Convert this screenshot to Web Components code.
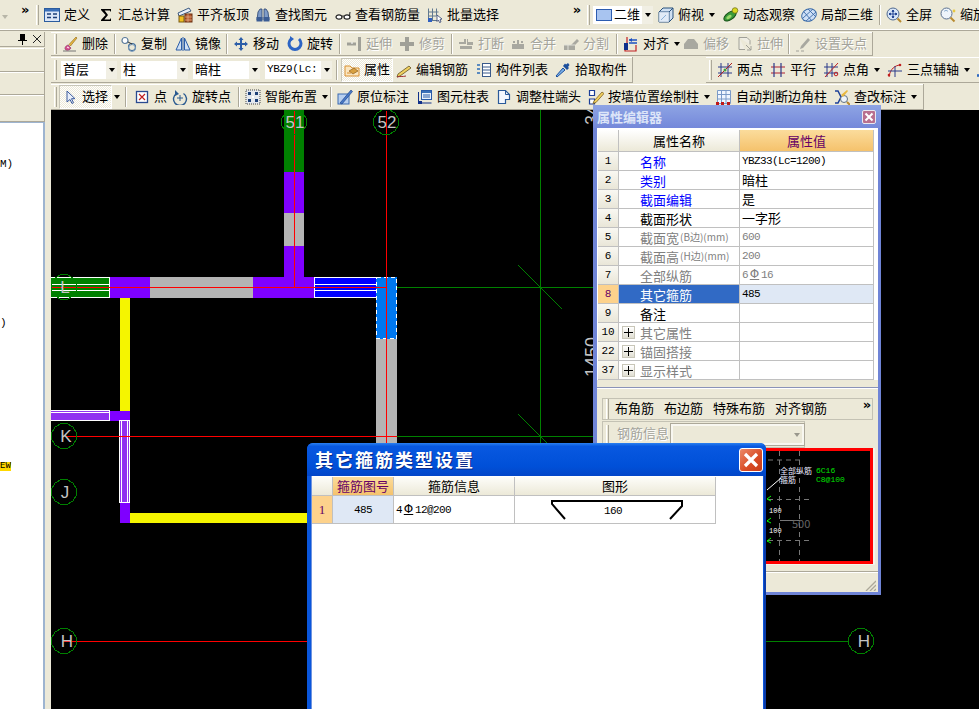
<!DOCTYPE html>
<html lang="zh">
<head>
<meta charset="utf-8">
<title>钢筋算量</title>
<style>
  html, body { margin: 0; padding: 0; background: #ece9d8; overflow: hidden; }
  body { font: 13px/16px "Noto Sans CJK SC", "Liberation Sans", sans-serif; color: #000; }
</style>
</head>
<body>
<cad-app>
  <tool-row slot="top" full>
    <top-stub></top-stub>
    <tool-grip></tool-grip>
    <tool-btn w="54" icon="define" label="定义"></tool-btn>
    <tool-btn w="79" icon="sigma" label="汇总计算"></tool-btn>
    <tool-btn w="78" icon="level" label="平齐板顶"></tool-btn>
    <tool-btn w="80" icon="binoculars" label="查找图元"></tool-btn>
    <tool-btn w="92" icon="glasses" label="查看钢筋量"></tool-btn>
    <tool-btn w="146" icon="batch" label="批量选择"></tool-btn>
    <tool-more w="14"></tool-more>
    <tool-grip></tool-grip>
    <tool-combo w="60" gap="1" icon="plane" label="二维"></tool-combo>
    <tool-btn w="65" gap="2" icon="cube" label="俯视" caret></tool-btn>
    <tool-btn w="78" icon="orbit" label="动态观察"></tool-btn>
    <tool-btn w="77" icon="sphere" label="局部三维"></tool-btn>
    <tool-sep></tool-sep>
    <tool-btn w="54" icon="fullscreen" label="全屏"></tool-btn>
    <tool-btn w="60" icon="zoom" label="缩放"></tool-btn>
  </tool-row>

  <dock-panel slot="dock"></dock-panel>

  <tool-row slot="bars" h="25">
    <tool-bar>
      <tool-grip></tool-grip>
      <tool-btn w="51" icon="brush" label="删除"></tool-btn>
      <tool-sep></tool-sep>
      <tool-btn w="54" icon="copy" label="复制"></tool-btn>
      <tool-btn w="50" icon="mirror" label="镜像"></tool-btn>
      <tool-sep></tool-sep>
      <tool-btn w="54" icon="move" label="移动"></tool-btn>
      <tool-btn w="51" icon="rotate" label="旋转"></tool-btn>
      <tool-sep></tool-sep>
      <tool-btn w="53" icon="extend" label="延伸" disabled></tool-btn>
      <tool-btn w="51" icon="trim" label="修剪" disabled></tool-btn>
      <tool-sep></tool-sep>
      <tool-btn w="52" icon="cut" label="打断" disabled></tool-btn>
      <tool-btn w="53" icon="merge" label="合并" disabled></tool-btn>
      <tool-btn w="52" icon="split" label="分割" disabled></tool-btn>
      <tool-sep></tool-sep>
      <tool-btn w="60" icon="align" label="对齐" caret></tool-btn>
      <tool-btn w="54" icon="offset" label="偏移" disabled></tool-btn>
      <tool-btn w="50" icon="stretch" label="拉伸" disabled></tool-btn>
      <tool-sep></tool-sep>
      <tool-btn w="80" icon="grippen" label="设置夹点" disabled></tool-btn>
    </tool-bar>
  </tool-row>

  <tool-row slot="bars" h="27">
    <tool-bar>
      <tool-grip></tool-grip>
      <tool-combo w="56" gap="2" label="首层"></tool-combo>
      <tool-combo w="67" gap="4" label="柱"></tool-combo>
      <tool-combo w="67" gap="5" label="暗柱"></tool-combo>
      <tool-combo w="67" gap="5" label="YBZ9(Lc:" mono></tool-combo>
      <tool-sep w="9"></tool-sep>
      <tool-btn w="52" icon="props" label="属性" pressed></tool-btn>
      <tool-btn w="80" icon="pencil" label="编辑钢筋"></tool-btn>
      <tool-btn w="79" icon="list" label="构件列表"></tool-btn>
      <tool-btn w="80" icon="dropper" label="拾取构件"></tool-btn>
    </tool-bar>
    <tool-bar gap="73">
      <tool-grip></tool-grip>
      <tool-btn w="53" icon="twopoint" label="两点"></tool-btn>
      <tool-btn w="53" icon="parallel" label="平行"></tool-btn>
      <tool-btn w="64" icon="angle" label="点角" caret></tool-btn>
      <tool-btn w="90" icon="arc" label="三点辅轴" caret></tool-btn>
      <tool-btn w="20" icon="tail"></tool-btn>
    </tool-bar>
  </tool-row>

  <tool-row slot="bars" h="27">
    <tool-bar>
      <tool-grip></tool-grip>
      <tool-btn w="53" icon="arrow" label="选择" pressed></tool-btn>
      <tool-caret w="9"></tool-caret>
      <tool-sep w="10"></tool-sep>
      <tool-btn w="38" icon="point" label="点"></tool-btn>
      <tool-btn w="65" icon="rotpoint" label="旋转点"></tool-btn>
      <tool-sep></tool-sep>
      <tool-btn w="84" icon="smart" label="智能布置" caret></tool-btn>
      <tool-sep></tool-sep>
      <tool-btn w="80" icon="inplace" label="原位标注"></tool-btn>
      <tool-btn w="79" icon="coltable" label="图元柱表"></tool-btn>
      <tool-btn w="92" icon="adjust" label="调整柱端头"></tool-btn>
      <tool-btn w="128" icon="bywall" label="按墙位置绘制柱" caret></tool-btn>
      <tool-btn w="118" icon="autocorner" label="自动判断边角柱"></tool-btn>
      <tool-btn w="92" icon="checkmark" label="查改标注" caret></tool-btn>
    </tool-bar>
  </tool-row>

  <cad-canvas slot="canvas"></cad-canvas>

  <prop-editor slot="windows">
    <prop-row n="1" name="名称" kind="link" value="YBZ33(Lc=1200)" mono></prop-row>
    <prop-row n="2" name="类别" kind="link" value="暗柱"></prop-row>
    <prop-row n="3" name="截面编辑" kind="link" value="是"></prop-row>
    <prop-row n="4" name="截面形状" value="一字形"></prop-row>
    <prop-row n="5" name="截面宽" note="(B边)(mm)" kind="muted" value="600" mono></prop-row>
    <prop-row n="6" name="截面高" note="(H边)(mm)" kind="muted" value="200" mono></prop-row>
    <prop-row n="7" name="全部纵筋" kind="muted" value="6Φ16" mono></prop-row>
    <prop-row n="8" name="其它箍筋" kind="selected" value="485" mono></prop-row>
    <prop-row n="9" name="备注"></prop-row>
    <prop-row n="10" name="其它属性" kind="muted" expand></prop-row>
    <prop-row n="22" name="锚固搭接" kind="muted" expand></prop-row>
    <prop-row n="37" name="显示样式" kind="muted" expand></prop-row>
  </prop-editor>

  <stirrup-dialog slot="windows"></stirrup-dialog>
</cad-app>

<script>
const ICONS = {
  define: `<rect x=".5" y="1.5" width="15" height="13" fill="#dbe6f7" stroke="#2b5c9e"/><rect x="1" y="2" width="14" height="2.5" fill="#3a6fb8"/><path d="M3 7h4M3 10.5h4M9 7h4M9 10.5h4" stroke="#1c3f78" stroke-width="1.3"/>`,
  sigma: `<path d="M3 2h10v3l-1.2-1.5H6.6L10 8l-3.6 4.4h5.4L13 11v3H3v-1l4.6-5L3 3z" fill="#000"/>`,
  level: `<path d="M1 6l11-5 2 3-12 5z" fill="#e8eef6" stroke="#3c5a80"/><rect x="2" y="9" width="5" height="6" fill="#f0c020" stroke="#7a5a10"/><rect x="8" y="7" width="7" height="8" fill="#b85a30" stroke="#6a3010"/><path d="M8 10h7M8 13h7M11 7v8" stroke="#e8c0a0" stroke-width=".6"/>`,
  binoculars: `<path d="M2 13l1-8 2-3h2v11zM14 13l-1-8-2-3H9v11z" fill="#7f9cc8" stroke="#26406e" stroke-width=".8"/><rect x="1.5" y="10" width="6" height="4.5" fill="#3b5c94"/><rect x="8.5" y="10" width="6" height="4.5" fill="#3b5c94"/>`,
  glasses: `<ellipse cx="4" cy="10" rx="3" ry="2.2" fill="#fff" stroke="#222" stroke-width="1.2"/><ellipse cx="12" cy="10" rx="3" ry="2.2" fill="#fff" stroke="#222" stroke-width="1.2"/><path d="M7 9.5c1-1 1-1 2 0M14.5 9L15 5" stroke="#222" fill="none"/>`,
  batch: `<path d="M1.5 1.5v12h9M1.5 5h10M1.5 9h8M5.5 1.5v12M9.5 1.5v7" stroke="#607890" fill="none"/><rect x="1" y="11" width="4" height="4" fill="#3060c0"/><path d="M10 8l5 4-2 .5 1 2.5-1.5.5-1-2.5-1.5 1.5z" fill="#fff" stroke="#304070" stroke-width=".8"/>`,
  plane: `<rect x=".5" y="2.5" width="15" height="11" fill="#a8c4f0" stroke="#2c5cb0"/>`,
  cube: `<path d="M1 5l4-4h10v10l-4 4H1z" fill="#cfe0f2" stroke="#28507c"/><path d="M1 5h10v10M11 5l4-4" stroke="#28507c" fill="none"/><path d="M1 5h10v10H1z" fill="#e8f0fa" opacity=".7"/><path d="M3 13l5-5" stroke="#8ab0d8"/>`,
  orbit: `<ellipse cx="7" cy="9" rx="7" ry="3.6" transform="rotate(-35 7 9)" fill="#3a9a3a" stroke="#155015"/><ellipse cx="6" cy="10" rx="3" ry="1.6" transform="rotate(-35 6 10)" fill="#9ad86a"/><circle cx="12" cy="3.5" r="2.8" fill="#d8d820" stroke="#6a6a10" stroke-width=".7"/>`,
  sphere: `<ellipse cx="8" cy="8" rx="7.5" ry="6" transform="rotate(-25 8 8)" fill="#cfe0f6" stroke="#3a6aa8"/><path d="M2 11L12 2M5 14L15 5M3 5l8 9M7 2l8 8" stroke="#3a6aa8" stroke-width=".9"/>`,
  fullscreen: `<circle cx="7" cy="7" r="6" fill="#d8e6f8" stroke="#506a90"/><path d="M7 3v8M3 7h8M7 3L6 4.4h2zM7 11l-1-1.4h2zM3 7l1.4-1v2zM11 7l-1.4-1v2z" stroke="#1c3e90" fill="#1c3e90" stroke-width=".9"/><path d="M11.5 11.5l3.5 3.5" stroke="#b88a30" stroke-width="2"/>`,
  zoom: `<circle cx="6.5" cy="6.5" r="5.5" fill="#eef4fb" stroke="#5a7090"/><path d="M4 4.5c1-1.4 3-1.4 4 0" stroke="#8fb0d0" fill="none"/><path d="M10.5 10.5l4 4" stroke="#b88a30" stroke-width="2"/><circle cx="14" cy="4" r="1.4" fill="#e8c840"/>`,
  brush: `<path d="M1 15h13" stroke="#777"/><path d="M4 14c-2-1-1-4 2-5l3 3c-1 2-3 2.400-5 2z" fill="#d85090" stroke="#803060" stroke-width=".6"/><path d="M7 8.500L14 1l1 1-6.500 8z" fill="#e8b840" stroke="#8a6010" stroke-width=".6"/><path d="M5 11l2 1" stroke="#fff"/>`,
  copy: `<circle cx="4" cy="4.500" r="3" fill="#fff" stroke="#5a7a9a" stroke-width="1.200"/><circle cx="11" cy="11" r="3.500" fill="none" stroke="#3a6a9a" stroke-width="1.200"/><circle cx="11" cy="12" r="3.500" fill="none" stroke="#7a9aba"/><path d="M7 6l4 2" stroke="#333"/>`,
  mirror: `<path d="M1 14L6.500 2v12zM15 14L9.500 2v12z" fill="#cfe0f4" stroke="#2a5ca8" stroke-linejoin="round"/><path d="M8 1v14" stroke="#2a5ca8"/>`,
  move: `<path d="M8 1l2.500 3H9v3h3V5.500L15 8l-3 2.500V9H9v3h1.500L8 15l-2.500-3H7V9H4v1.500L1 8l3-2.500V7h3V4H5.500z" fill="#2c5ea8"/>`,
  rotate: `<path d="M4 3a6 6 0 1 0 8 0" fill="none" stroke="#2c64c4" stroke-width="3"/><path d="M3 0v6l4-3z" fill="#2c64c4"/>`,
  extend: `<path d="M1 8h9" stroke="#a0a098" stroke-width="3"/><rect x="12" y="1" width="3" height="14" fill="#a0a098"/><path d="M5 7h2" stroke="#fff"/>`,
  trim: `<path d="M8 1v14M1 8h14" stroke="#a0a098" stroke-width="4"/>`,
  cut: `<path d="M1 6h5v-3h2v5H1zM10 6h5v3H9V3h1z M2 10h12v3H2z" fill="#a8a8a0"/>`,
  merge: `<path d="M2 8h5V4h2v4h5v5H2z" fill="#a8a8a0"/><rect x="3" y="5" width="2" height="2" fill="#a8a8a0"/><rect x="11" y="5" width="2" height="2" fill="#a8a8a0"/>`,
  split: `<path d="M1 9h7l6-6 2 2-4 4v5H1z" fill="#a8a8a0"/><path d="M1 9h11M5 9v5" stroke="#e0e0d8"/>`,
  align: `<path d="M4 1v8H2v6h11v-6" stroke="#c02020" stroke-width="1.200" fill="none"/><rect x="1" y="7" width="4" height="7" fill="#10308a"/><path d="M6 4h8M6 7h8" stroke="#1c50c0" stroke-width="1.300"/><path d="M6 4l3-2v4z" fill="#1c50c0"/>`,
  offset: `<path d="M5 3h6l4 5v5H1V8z" fill="#a8a8a0"/>`,
  stretch: `<path d="M2 1.500h8l3 3v4M2 1.500v12h6" fill="#f0eee4" stroke="#a0a098"/><path d="M9 9l5 5M14 10v4h-4" stroke="#a0a098" fill="none"/>`,
  grippen: `<path d="M6 10l7-8 2 2-7 8-3 1z" fill="#a8a8a0"/><path d="M1 15h3M6 15h3" stroke="#a0a098"/>`,
  props: `<path d="M1 4h5l2 2h7v8H1z" fill="#fbe6c0" stroke="#d89030"/><path d="M5 9l5-3 4 3-5 3z" fill="#d8a040" stroke="#805010" stroke-width=".6"/><path d="M3 11h4" stroke="#d89030"/>`,
  pencil: `<path d="M2 12L13 4l2 2-11 8-3 1z" fill="#f0d060" stroke="#504010" stroke-width=".7"/><path d="M1 15c3-1 5 0 9-1" stroke="#a03030" fill="none"/>`,
  list: `<g fill="#5a8ac0"><rect x="1" y="2" width="3" height="2"/><rect x="1" y="6" width="3" height="2"/><rect x="1" y="10" width="3" height="2"/></g><rect x="6.500" y="1.500" width="8" height="13" fill="#fff" stroke="#3a5a8a"/><path d="M6.500 5h8M6.500 8h8M6.500 11h8" stroke="#3a5a8a"/>`,
  dropper: `<path d="M2 15l-1-1 7-8 2 2z" fill="#7ab0e8" stroke="#1c4f9c"/><path d="M8 4l4 4 2-2-1-1 1.500-2-1.500-2-2 1.500-1-1z" fill="#1c4f9c"/>`,
  twopoint: `<path d="M4 1v14M11 1v14M1 5h14M1 11h14" stroke="#2a3a8a"/><path d="M1 15L15 1" stroke="#b02020"/><circle cx="8" cy="8" r="1.500" fill="#40a040"/>`,
  parallel: `<path d="M1 5h14M1 11h14" stroke="#b02030" stroke-width="1.200"/><path d="M4 1v14M11 1v14" stroke="#2a3a8a" stroke-width="1.200"/>`,
  angle: `<path d="M4 1v14M9 1v14M1 5h14M1 11h14" stroke="#2a3a8a"/><path d="M2 15L15 1" stroke="#c02020"/><circle cx="13" cy="12" r="1.800" fill="none" stroke="#c02020"/>`,
  arc: `<path d="M2 15C3 7 8 3 14 3" stroke="#c02020" fill="none"/><path d="M1 9h14M8 4v11" stroke="#2a3a8a"/><circle cx="2" cy="13" r="1.300" fill="#c02020"/><circle cx="13" cy="3" r="1.300" fill="#c02020"/>`,
  tail: `<path d="M0 14h3M1 12v2" stroke="#2060c0" stroke-width="1.500"/>`,
  arrow: `<path d="M5 2v11l3-2.500 2 4 1.500-.800-2-4H13z" fill="#e8eefa" stroke="#3a5a9a"/>`,
  point: `<rect x="2.500" y="2.500" width="11" height="11" fill="#fff" stroke="#2a4a90" stroke-width="1.300"/><path d="M5 5l6 6M11 5l-6 6" stroke="#c02020" stroke-width="1.200"/>`,
  rotpoint: `<path d="M4.500 4.500a6.500 6.500 0 1 0 7 0" fill="none" stroke="#2a5a90" stroke-width="1.400"/><path d="M3 1v6l4-2z" fill="#2a5a90"/><path d="M8 6v6M5 9h6" stroke="#2a5a90"/>`,
  smart: `<rect x="1" y="1" width="14" height="14" fill="#e4e8ee" stroke="#444" stroke-dasharray="1 1"/><g fill="#1c3f78"><rect x="3" y="3" width="3" height="3"/><rect x="10" y="3" width="3" height="3"/><rect x="3" y="10" width="3" height="3"/><rect x="10" y="10" width="3" height="3"/></g><path d="M7 7h2v2H7z" fill="#fff"/>`,
  inplace: `<rect x="1" y="5" width="11" height="10" fill="#b8d0f0" stroke="#3a6ab0"/><path d="M3 14L14 1l1.500 1.500L5 15z" fill="#4a7ac8" stroke="#123a80" stroke-width=".6"/>`,
  coltable: `<rect x="4.500" y="1.500" width="10" height="9" fill="#e8f0fb" stroke="#2a5aa8"/><rect x="5" y="2" width="9" height="2" fill="#3a6fb8"/><path d="M6 6h7M6 8h7" stroke="#2a5aa8"/><path d="M1.500 3v11h13" stroke="#10308a" fill="none"/><rect x="1" y="12" width="4" height="3" fill="#10308a"/>`,
  adjust: `<path d="M2.500 1.500h7l4 4v5h-4v4h-7z" fill="#f4f8fe" stroke="#2a5a9a" stroke-width="1.200"/><path d="M9.500 1.500v4h4" fill="none" stroke="#2a5a9a"/>`,
  bywall: `<path d="M1.500 1.500h5v5h-5zM1.500 10h5v5h-5z" fill="#fff" stroke="#1c3f98" stroke-width="1.200"/><path d="M6 12L14 3l2 1.500-8 9-3 1z" fill="#f0d060" stroke="#705010" stroke-width=".7"/>`,
  autocorner: `<path d="M1.500 1.500h13v13h-13zM5.500 1.500v13M10 1.500v13M1.500 5.500h13M1.500 10h13" fill="#f0f6ff" stroke="#7a9ac8"/><g fill="#c01818"><rect x="0" y="13" width="3" height="3"/><rect x="5" y="13" width="3" height="3"/><rect x="11" y="13" width="3" height="3"/></g>`,
  checkmark: `<path d="M1 2h3l3 6-3 6H1" fill="none" stroke="#1c3f98" stroke-width="1.500"/><circle cx="10" cy="10" r="3.500" fill="#eef4fb" stroke="#607080"/><path d="M13 13l3 3" stroke="#b88a30" stroke-width="2"/><path d="M7 6l6-5 1 1-5 6z" fill="#e8b840"/>`
};

function iconSvg(name, size = 16) {
  return `<svg width="${size}" height="${size}" viewBox="0 0 16 16" style="display:block;flex:none">${ICONS[name] || ''}</svg>`;
}

const MONO = `"Liberation Mono", "Noto Sans CJK SC", monospace`;
const CARET = `<i style="display:block;flex:none;width:0;height:0;border:3px solid transparent;border-top:4px solid #000;border-bottom:0;"></i>`;
// rebar grade mark: takes a full CJK cell in the reference
const REBAR = `<span style="display:inline-block;width:13px;text-align:center;font:12px/16px 'DejaVu Sans',sans-serif;letter-spacing:0;text-decoration:underline">Φ</span>`;

const appTemplate = document.createElement('template');
appTemplate.innerHTML = `
  <style>
    :host {
      display: grid;
      position: relative;
      width: 979px;
      height: 709px;
      overflow: hidden;
      background: #ece9d8;
      grid-template-columns: 51px 928px;
      grid-template-rows: 31px 79px 599px;
      grid-template-areas: "top top" "dock bars" "dock canvas";
    }
    .top { grid-area: top; min-width: 0; }
    .dock { grid-area: dock; min-height: 0; }
    .bars { grid-area: bars; display: flex; flex-direction: column; min-width: 0; }
    .canvas { grid-area: canvas; min-height: 0; }
  </style>
  <div class="top"><slot name="top"></slot></div>
  <div class="dock"><slot name="dock"></slot></div>
  <div class="bars"><slot name="bars"></slot></div>
  <div class="canvas"><slot name="canvas"></slot></div>
  <slot name="windows"></slot>
`;
class CadApp extends HTMLElement {
  constructor() {
    super();
    this.attachShadow({ mode: 'open' });
    this.shadowRoot.appendChild(appTemplate.content.cloneNode(true));
  }
}

const rowTemplate = document.createElement('template');
rowTemplate.innerHTML = `
  <style>
    :host { display: flex; box-sizing: border-box; overflow: hidden; flex: none; }
    :host([full]) { height: 31px; border-bottom: 1px solid #aca899; box-shadow: inset 0 -1px 0 #fff; align-items: center; }
  </style>
  <slot></slot>
`;
class ToolRow extends HTMLElement {
  constructor() {
    super();
    this.attachShadow({ mode: 'open' });
    this.shadowRoot.appendChild(rowTemplate.content.cloneNode(true));
  }
  connectedCallback() {
    if (this.hasAttribute('h')) this.style.height = this.getAttribute('h') + 'px';
  }
}

const barTemplate = document.createElement('template');
barTemplate.innerHTML = `
  <style>
    :host {
      display: flex;
      align-items: center;
      flex: none;
      box-sizing: border-box;
      height: calc(100% - 1px);
      margin-top: 1px;
      background: #ece9d8;
      border-bottom: 1px solid #aca899;
      border-right: 1px solid #aca899;
      box-shadow: inset 0 1px 0 #fff;
    }
  </style>
  <slot></slot>
`;
class ToolBar extends HTMLElement {
  constructor() {
    super();
    this.attachShadow({ mode: 'open' });
    this.shadowRoot.appendChild(barTemplate.content.cloneNode(true));
  }
  connectedCallback() {
    if (this.hasAttribute('gap')) this.style.marginLeft = this.getAttribute('gap') + 'px';
  }
}

const gripTemplate = document.createElement('template');
gripTemplate.innerHTML = `
  <style>
    :host { display: block; flex: none; width: 8px; height: 20px; box-sizing: border-box; }
    div { width: 3px; height: 100%; margin-left: 3px; background: #ece9d8; border-left: 1px solid #fff; border-right: 1px solid #aca899; box-sizing: border-box; }
  </style>
  <div></div>
`;
class ToolGrip extends HTMLElement {
  constructor() {
    super();
    this.attachShadow({ mode: 'open' });
    this.shadowRoot.appendChild(gripTemplate.content.cloneNode(true));
  }
}

const sepTemplate = document.createElement('template');
sepTemplate.innerHTML = `
  <style>
    :host { display: block; flex: none; width: 8px; height: 20px; box-sizing: border-box; padding-left: 4px; }
    div { width: 2px; height: 100%; border-left: 1px solid #aca899; border-right: 1px solid #fff; box-sizing: border-box; }
  </style>
  <div></div>
`;
class ToolSep extends HTMLElement {
  constructor() {
    super();
    this.attachShadow({ mode: 'open' });
    this.shadowRoot.appendChild(sepTemplate.content.cloneNode(true));
  }
  connectedCallback() {
    if (this.hasAttribute('w')) this.style.width = this.getAttribute('w') + 'px';
  }
}

const btnTemplate = document.createElement('template');
btnTemplate.innerHTML = `
  <style>
    :host {
      display: flex;
      align-items: center;
      flex: none;
      box-sizing: border-box;
      height: 100%;
      padding-left: 3px;
      white-space: nowrap;
    }
    .ico { flex: none; margin-right: 4px; }
    .ico:empty { display: none; }
    .txt { padding-bottom: 2px; }
    .caret { margin-left: 5px; }
    :host([disabled]) { color: #a3a39b; text-shadow: 1px 1px 0 #fff; }
    :host([pressed]) {
      height: 24px;
      padding-left: 2px;
      border: 1px solid #c8c6b8;
      background: repeating-conic-gradient(#fff 0 25%, #ece9d8 0 50%) 0 0 / 2px 2px;
      border-right-color: #fff;
      border-bottom-color: #fff;
    }
  </style>
  <span class="ico"></span><span class="txt"></span><span class="caret"></span>
`;
class ToolBtn extends HTMLElement {
  constructor() {
    super();
    this.attachShadow({ mode: 'open' });
    this.shadowRoot.appendChild(btnTemplate.content.cloneNode(true));
  }
  connectedCallback() {
    const root = this.shadowRoot;
    if (this.hasAttribute('w')) this.style.width = this.getAttribute('w') + 'px';
    if (this.hasAttribute('gap')) this.style.marginLeft = this.getAttribute('gap') + 'px';
    if (this.hasAttribute('icon')) root.querySelector('.ico').innerHTML = iconSvg(this.getAttribute('icon'));
    root.querySelector('.txt').textContent = this.getAttribute('label') || '';
    if (this.hasAttribute('caret')) root.querySelector('.caret').innerHTML = CARET;
  }
}

const caretTemplate = document.createElement('template');
caretTemplate.innerHTML = `
  <style>:host { display: flex; flex: none; align-items: center; justify-content: center; }</style>
  ${CARET}
`;
class ToolCaret extends HTMLElement {
  constructor() {
    super();
    this.attachShadow({ mode: 'open' });
    this.shadowRoot.appendChild(caretTemplate.content.cloneNode(true));
  }
  connectedCallback() {
    this.style.width = (this.getAttribute('w') || 9) + 'px';
  }
}

const moreTemplate = document.createElement('template');
moreTemplate.innerHTML = `
  <style>
    :host { display: block; flex: none; align-self: flex-start; font: bold 13px/16px "DejaVu Sans", sans-serif; padding-top: 2px; text-align: center; }
  </style>
  »
`;
class ToolMore extends HTMLElement {
  constructor() {
    super();
    this.attachShadow({ mode: 'open' });
    this.shadowRoot.appendChild(moreTemplate.content.cloneNode(true));
  }
  connectedCallback() {
    this.style.width = (this.getAttribute('w') || 14) + 'px';
  }
}

const comboTemplate = document.createElement('template');
comboTemplate.innerHTML = `
  <style>
    :host {
      display: flex;
      flex: none;
      align-items: center;
      box-sizing: border-box;
      height: 18px;
      background: #fff;
      white-space: nowrap;
    }
    .txt { flex: 1; min-width: 0; padding: 0 0 2px 2px; }
    .ico { flex: none; margin-left: 3px; }
    .ico:empty { display: none; }
    .btn { flex: none; width: 11px; height: 100%; display: flex; align-items: center; justify-content: center; background: #f1efe4; }
    :host([disabled]) { height: 21px; background: #ece9d8; border: 2px solid #f8f7f0; box-shadow: 0 0 0 1px #aca899; }
    :host([disabled]) .btn { opacity: .35; background: none; }
  </style>
  <span class="ico"></span><span class="txt"></span><span class="btn">${CARET}</span>
`;
class ToolCombo extends HTMLElement {
  constructor() {
    super();
    this.attachShadow({ mode: 'open' });
    this.shadowRoot.appendChild(comboTemplate.content.cloneNode(true));
  }
  connectedCallback() {
    const root = this.shadowRoot;
    this.style.width = this.getAttribute('w') + 'px';
    if (this.hasAttribute('gap')) this.style.marginLeft = this.getAttribute('gap') + 'px';
    if (this.hasAttribute('icon')) root.querySelector('.ico').innerHTML = iconSvg(this.getAttribute('icon'));
    const txt = root.querySelector('.txt');
    txt.textContent = this.getAttribute('label') || '';
    if (this.hasAttribute('mono')) txt.style.cssText = `font:11px/16px ${MONO};letter-spacing:-.3px`;
  }
}

const stubTemplate = document.createElement('template');
stubTemplate.innerHTML = `
  <style>
    :host { display: flex; flex: none; width: 33px; height: 100%; align-items: flex-start; box-sizing: border-box; }
    .c { margin: 15px 0 0 2px; width: 0; height: 0; border: 3px solid transparent; border-top: 4px solid #b8b6a8; border-bottom: 0; }
    .m { margin-left: 13px; padding-top: 2px; font: bold 13px/16px "DejaVu Sans", sans-serif; }
  </style>
  <div class="c"></div><div class="m">»</div>
`;
class TopStub extends HTMLElement {
  constructor() {
    super();
    this.attachShadow({ mode: 'open' });
    this.shadowRoot.appendChild(stubTemplate.content.cloneNode(true));
  }
}

const dockTemplate = document.createElement('template');
dockTemplate.innerHTML = `
  <style>
    :host { display: flex; flex-direction: column; width: 51px; height: 678px; box-sizing: border-box; padding: 1px 6px 0 0; background: #ece9d8; }
    .head {
      flex: none; height: 15px; display: flex; align-items: center; justify-content: flex-end;
      gap: 6px; padding-right: 3px; border-bottom: 1px solid #aca899; box-sizing: border-box;
      border-right: 1px solid #aca899;
    }
    .slot { flex: none; box-sizing: border-box; border-bottom: 1px solid #aca899; border-right: 1px solid #aca899; box-shadow: inset 0 1px 0 #fff; }
    .list {
      flex: 1; background: #fff; box-sizing: border-box; overflow: hidden;
      border-top: 1px solid #9db4d0; border-right: 2px solid #9db4d0;
      font: 11px/14px ${MONO}; white-space: nowrap;
    }
    .list div { height: 14px; }
    .tag { background: #ffd800; font-size: 9px; line-height: 9px; display: inline-block; vertical-align: top; margin-top: 3px; }
  </style>
  <div class="head">
    <svg width="9" height="11" viewBox="0 0 9 11"><path d="M2 0h5v6h2v1H5v4H4V7H0V6h2z" fill="#000"/></svg>
    <svg width="8" height="8" viewBox="0 0 8 8"><path d="M0 0l8 8M8 0L0 8" stroke="#222"/></svg>
  </div>
  <div class="slot" style="height:24px;margin-top:1px"></div>
  <div class="slot" style="height:23px"></div>
  <div class="slot" style="height:27px"></div>
  <div class="list">
    <div style="margin-top:34px">M)</div>
    <div style="margin-top:145px">)</div>
    <div style="margin-top:129px"><span class="tag">EW</span></div>
  </div>
`;
class DockPanel extends HTMLElement {
  constructor() {
    super();
    this.attachShadow({ mode: 'open' });
    this.shadowRoot.appendChild(dockTemplate.content.cloneNode(true));
  }
}

function bubble(cx, cy, label, dx = 1) {
  const pts = [];
  for (let i = 0; i < 12; i++) {
    const a = Math.PI / 6 * i + Math.PI / 12;
    pts.push((cx + 12.7 * Math.cos(a)).toFixed(1) + ',' + (cy + 12.7 * Math.sin(a)).toFixed(1));
  }
  return `<polygon points="${pts.join(' ')}" fill="none" stroke="#008000" shape-rendering="crispEdges"/>
    <text x="${cx + dx}" y="${cy + 6}" text-anchor="middle" font-size="17" fill="#c4c4c4">${label}</text>`;
}

const canvasTemplate = document.createElement('template');
canvasTemplate.innerHTML = `
  <style>
    :host { display: block; width: 928px; height: 599px; background: #000; overflow: hidden; }
    svg { display: block; font-family: "Liberation Sans", sans-serif; }
  </style>
  <svg width="928" height="599" viewBox="51 110 928 599" shape-rendering="crispEdges">
    <!-- walls -->
    <rect x="284" y="110" width="20" height="62" fill="#008000"/>
    <rect x="284" y="172" width="20" height="41" fill="#7f00ff"/>
    <rect x="284" y="213" width="20" height="33" fill="#b4b4b4"/>
    <rect x="284" y="246" width="20" height="31" fill="#7f00ff"/>
    <rect x="51" y="277" width="59" height="21" fill="#008000"/>
    <path d="M51 277.500H109.500V297.500H51M51 284.500H109M51 290.500H109" fill="none" stroke="#fff"/>
    <rect x="110" y="277" width="40" height="21" fill="#7f00ff"/>
    <rect x="150" y="277" width="103" height="21" fill="#b4b4b4"/>
    <rect x="253" y="277" width="61" height="21" fill="#7f00ff"/>
    <rect x="314" y="277" width="63" height="21" fill="#0000ff"/>
    <path d="M314.500 277.500H376.500V297.500H314.500ZM315 284.500H376M315 290.500H376" fill="none" stroke="#fff"/>
    <rect x="376" y="339" width="21" height="110" fill="#b4b4b4"/>
    <rect x="376" y="277" width="21" height="62" fill="#0078f0"/>
    <rect x="376.500" y="277.500" width="20" height="61" fill="none" stroke="#fff" stroke-dasharray="4 3"/>
    <rect x="120" y="298" width="10" height="113" fill="#f5f500"/>
    <rect x="110" y="411" width="20" height="10" fill="#7f00ff"/>
    <rect x="51" y="410" width="59" height="11" fill="#9030f0"/>
    <path d="M51 410.500H109.500V420.500H51M51 412.500H109" fill="none" stroke="#fff"/>
    <rect x="120" y="420" width="10" height="83" fill="#9030f0"/>
    <path d="M119.500 420.500H129.500V502.500H119.500ZM121.500 421V502M127.500 421V502" fill="none" stroke="#fff"/>
    <rect x="120" y="503" width="10" height="20" fill="#7f00ff"/>
    <rect x="130" y="513" width="178" height="10" fill="#f5f500"/>
    <!-- axes -->
    <path d="M294.500 111V287M52 287.500H387M386.500 111V445M66 436.500H397M64 641.500H310" stroke="#ff0000" fill="none"/>
    <path d="M397 287.500H593M540.500 110V445M397 436.500H593M766 641.500H849" stroke="#008000" fill="none"/>
    <g shape-rendering="auto">
      <path d="M518 265L562 309M518 414L562 458" stroke="#008000" fill="none"/>
      ${bubble(294, 122, '51')}
      ${bubble(386, 122, '52')}
      ${bubble(64, 287, 'L')}
      ${bubble(64, 436, 'K', 2)}
      ${bubble(64, 492, 'J')}
      ${bubble(64, 641, 'H', 3)}
      ${bubble(861, 641, 'H', 3)}
      <text transform="translate(598 377) rotate(-90)" font-size="18" fill="#c4c4c4">1450</text>
      <text transform="translate(598 125) rotate(-90)" font-size="18" fill="#c4c4c4">34</text>
    </g>
  </svg>
`;
class CadCanvas extends HTMLElement {
  constructor() {
    super();
    this.attachShadow({ mode: 'open' });
    this.shadowRoot.appendChild(canvasTemplate.content.cloneNode(true));
  }
}

const propRowTemplate = document.createElement('template');
propRowTemplate.innerHTML = `
  <style>
    :host {
      display: grid;
      grid-template-columns: 21px 121px 134px;
      height: 19px;
      box-sizing: border-box;
      white-space: nowrap;
    }
    .n, .name, .val { box-sizing: border-box; border-right: 1px solid #c0c0c0; border-bottom: 1px solid #c0c0c0; line-height: 18px; overflow: hidden; }
    .n { background: linear-gradient(#f9f8f2, #e9e6d8); text-align: center; font: 11px/18px ${MONO}; }
    .name { display: flex; align-items: center; padding-left: 21px; }
    .t { padding-top: 1px; }
    .val { padding-left: 2px; }
    .note { font-size: 10px; margin-left: 1px; }
    .plus {
      flex: none; width: 13px; height: 13px; margin: 0 5px 0 -18px; box-sizing: border-box; display: none;
      background: linear-gradient(#fff, #e0ded2); border: 1px solid #c8c6b8;
    }
    .plus svg { display: block; }
    :host([expand]) .plus { display: block; }
    :host([kind="link"]) .name { color: #0000ff; }
    :host([kind="muted"]) .name, :host([kind="muted"]) .val { color: #808080; }
    :host([kind="selected"]) .n { background: #fdd28c; color: #660066; }
    :host([kind="selected"]) .name { background: #316ac5; color: #fff; }
    :host([kind="selected"]) .val { background: #dfe8f5; }
  </style>
  <div class="n"></div>
  <div class="name"><span class="plus"><svg width="11" height="11" viewBox="0 0 11 11"><path d="M5.500 1v9M1 5.500h9" stroke="#000" fill="none"/></svg></span><span class="t"></span><span class="note"></span></div>
  <div class="val"></div>
`;
class PropRow extends HTMLElement {
  constructor() {
    super();
    this.attachShadow({ mode: 'open' });
    this.shadowRoot.appendChild(propRowTemplate.content.cloneNode(true));
  }
  connectedCallback() {
    const root = this.shadowRoot;
    root.querySelector('.n').textContent = this.getAttribute('n');
    root.querySelector('.t').textContent = this.getAttribute('name');
    root.querySelector('.note').textContent = this.getAttribute('note') || '';
    const val = root.querySelector('.val');
    const value = this.getAttribute('value') || '';
    if (this.hasAttribute('mono')) val.style.cssText = `font:11px/18px ${MONO};letter-spacing:-.6px`;
    val.innerHTML = value.replace('Φ', REBAR);
  }
}

const editorTemplate = document.createElement('template');
editorTemplate.innerHTML = `
  <style>
    :host {
      display: block;
      position: absolute;
      left: 593px;
      top: 105px;
      width: 288px;
      height: 490px;
      box-sizing: border-box;
      padding: 0 3px 3px 4px;
      background: #6f84d6;
    }
    .title {
      height: 23px; display: flex; align-items: center; justify-content: space-between;
      background: linear-gradient(#8ea4e4, #7488da);
      margin: 0 -3px 0 -4px; padding: 0 5px 0 4px;
      color: #dde5f8; font-weight: bold; font-size: 13px;
    }
    .x {
      width: 14px; height: 14px; box-sizing: border-box; border: 1px solid #e8e8f0; border-radius: 2px;
      background: #b9708f; display: flex; align-items: center; justify-content: center;
    }
    .upper { height: 252px; background: #fff; padding: 2px 0 0 1px; box-sizing: border-box; }
    .head { display: grid; grid-template-columns: 21px 121px 134px; height: 22px; white-space: nowrap; }
    .head div { box-sizing: border-box; border-right: 1px solid #c0c0c0; border-bottom: 1px solid #c0c0c0; text-align: center; line-height: 21px; background: linear-gradient(#fff, #ece9d8); }
    .head .on { background: linear-gradient(#fbdc9c, #f5c26c); color: #660066; }
    .lower {
      height: 212px; box-sizing: border-box; padding: 18px 5px 0 5px; background: #ece9d8;
      box-shadow: inset 0 7px 0 #ece9d8, inset 0 8px 0 #8a93b8, inset 0 9px 0 #fff;
      display: flex; flex-direction: column;
    }
    tool-bar.a { height: 22px; margin: 0; width: 271px; border: 1px solid #c4c2b4; box-shadow: none; }
    tool-bar.b { height: 27px; margin: 1px 0 0; width: 203px; border: 1px solid #c4c2b4; box-shadow: none; }
    tool-bar.a tool-more { padding-top: 0; margin-top: -2px; }
    .foot {
      flex: 1; margin: 6px -5px 0; border-top: 1px solid #aca899; box-shadow: inset 0 1px 0 #fff;
      display: flex; justify-content: flex-end; align-items: flex-end;
    }
    .foot svg { display: block; margin: 0 2px 1px 0; }
    .label { color: #a3a39b; text-shadow: 1px 1px 0 #fff; margin: 0 2px 3px 6px; }
  </style>
  <div class="title"><span>属性编辑器</span><span class="x"><svg width="10" height="10" viewBox="0 0 10 10"><path d="M1.500 1.500l7 7M8.500 1.500l-7 7" stroke="#fff" stroke-width="2"/></svg></span></div>
  <div class="upper">
    <div class="head"><div></div><div>属性名称</div><div class="on">属性值</div></div>
    <slot></slot>
  </div>
  <div class="lower">
    <tool-bar class="a">
      <tool-grip></tool-grip>
      <tool-btn w="49" gap="1" label="布角筋"></tool-btn>
      <tool-btn w="49" label="布边筋"></tool-btn>
      <tool-btn w="62" label="特殊布筋"></tool-btn>
      <tool-btn w="88" label="对齐钢筋"></tool-btn>
      <tool-more w="14"></tool-more>
    </tool-bar>
    <tool-bar class="b">
      <tool-grip></tool-grip>
      <span class="label">钢筋信息</span>
      <tool-combo w="133" disabled></tool-combo>
    </tool-bar>
    <rebar-preview></rebar-preview>
    <div class="foot">
      <svg width="11" height="11" viewBox="0 0 11 11"><path d="M1 11L11 1M5 11l6-6M9 11l2-2" stroke="#aca899" stroke-width="1.300"/></svg>
    </div>
  </div>
`;
class PropEditor extends HTMLElement {
  constructor() {
    super();
    this.attachShadow({ mode: 'open' });
    this.shadowRoot.appendChild(editorTemplate.content.cloneNode(true));
  }
}

const previewTemplate = document.createElement('template');
previewTemplate.innerHTML = `
  <style>
    :host { display: block; flex: none; width: 271px; height: 117px; box-sizing: border-box; margin-left: 2px; }
    svg { display: block; }
    text { font-family: "Noto Sans CJK SC", sans-serif; }
    .m { font-family: "Liberation Mono", monospace; }
  </style>
  <svg width="271" height="117" viewBox="604 449 271 117">
    <rect x="604" y="449" width="271" height="117" fill="#f4f3ea"/>
    <rect x="605.500" y="450.500" width="266" height="113" fill="#000" stroke="#ff0000" stroke-width="3"/>
    <path d="M779.500 452V562M799.500 452V562M768 461H800M768 500.500H810M768 541.500H810" stroke="#777" stroke-dasharray="5 4" fill="none"/>
    <path d="M780 521.500H800" stroke="#777"/>
    <path d="M767 491L781 479" stroke="#fff"/>
    <path d="M771 497l-4 3 4 2M771 519l-4 3 4 2M771 539l-4 3 4 2" stroke="#00ff00" fill="none"/>
    <text x="780" y="475" font-size="8" fill="#e8e8ff">全部纵筋</text>
    <text x="780" y="484" font-size="8" fill="#e8e8ff">箍筋</text>
    <text class="m" x="816" y="474" font-size="8" fill="#00e000">6C16</text>
    <text class="m" x="816" y="483" font-size="8" fill="#00e000">C8@100</text>
    <text class="m" x="769" y="514" font-size="7" fill="#fff">100</text>
    <text class="m" x="769" y="534" font-size="7" fill="#fff">100</text>
    <text x="792" y="529" font-size="11" fill="#666" font-family="Liberation Sans">500</text>
  </svg>
`;
class RebarPreview extends HTMLElement {
  constructor() {
    super();
    this.attachShadow({ mode: 'open' });
    this.shadowRoot.appendChild(previewTemplate.content.cloneNode(true));
  }
}

const dialogTemplate = document.createElement('template');
dialogTemplate.innerHTML = `
  <style>
    :host {
      display: block;
      position: absolute;
      left: 307px;
      top: 443px;
      width: 459px;
      height: 290px;
      box-sizing: border-box;
      background: #0a56dc;
      border-radius: 6px 6px 0 0;
      border-right: 2px solid #0a3aa8;
      padding: 0 1px 0 4px;
    }
    .title {
      height: 33px; margin: 0 -3px 0 -4px; padding: 0 3px 0 8px; display: flex; align-items: center; justify-content: space-between;
      background: linear-gradient(#2a80f0 0, #0858e0 10%, #0050d8 70%, #0246c8 100%);
      border-radius: 6px 6px 0 0;
      color: #fff; font-size: 18px; font-weight: bold; letter-spacing: 2px;
      text-shadow: 1px 1px 0 #0a2a8a;
    }
    .title > span:first-child { padding-bottom: 2px; }
    .x {
      width: 24px; height: 24px; box-sizing: border-box; border: 1px solid #fff; border-radius: 3px;
      background: linear-gradient(135deg, #ec8a68, #d84a24 60%, #c83c18);
      display: flex; align-items: center; justify-content: center;
    }
    .client { height: 257px; background: #fff; padding-top: 1px; box-sizing: border-box; border-left: 1px solid #6f94e0; }
    .grid { display: grid; grid-template-columns: 21px 61px 121px 201px; grid-template-rows: 19px 28px; width: 404px; white-space: nowrap; }
    .grid > div { box-sizing: border-box; border-right: 1px solid #c0c0c0; border-bottom: 1px solid #c0c0c0; display: flex; align-items: center; justify-content: center; overflow: hidden; }
    .hd { background: linear-gradient(#fdfdf9, #ece9d8); }
    .hd.on { background: linear-gradient(#fbdc9c, #f5c26c); color: #660066; }
    .rn { background: #fdd28c; color: #660066; font-family: "Liberation Serif", serif; }
    .id { background: #dfe8f5; font: 11px/16px ${MONO}; letter-spacing: -.6px; }
    .grid > .info { justify-content: flex-start; padding-left: 2px; font: 11px/16px ${MONO}; letter-spacing: -.6px; }
    .shape svg { display: block; }
    .shape text { font: 11px "Liberation Mono", monospace; letter-spacing: -.6px; }
  </style>
  <div class="title"><span>其它箍筋类型设置</span><span class="x"><svg width="16" height="16" viewBox="0 0 16 16"><path d="M2 2l12 12M14 2L2 14" stroke="#fff" stroke-width="3.200"/></svg></span></div>
  <div class="client">
    <div class="grid">
      <div class="hd"></div><div class="hd on">箍筋图号</div><div class="hd">箍筋信息</div><div class="hd">图形</div>
      <div class="rn">1</div><div class="id">485</div><div class="info"><span>4${REBAR}12@200</span></div>
      <div class="shape">
        <svg width="200" height="27" viewBox="515 497 200 27">
          <path d="M565 520L552 505V502H682V507L670 520" fill="none" stroke="#000" stroke-width="2"/>
          <text x="613" y="515" text-anchor="middle">160</text>
        </svg>
      </div>
    </div>
  </div>
`;
class StirrupDialog extends HTMLElement {
  constructor() {
    super();
    this.attachShadow({ mode: 'open' });
    this.shadowRoot.appendChild(dialogTemplate.content.cloneNode(true));
  }
}

customElements.define('cad-app', CadApp);
customElements.define('tool-row', ToolRow);
customElements.define('tool-bar', ToolBar);
customElements.define('tool-grip', ToolGrip);
customElements.define('tool-sep', ToolSep);
customElements.define('tool-btn', ToolBtn);
customElements.define('tool-caret', ToolCaret);
customElements.define('tool-more', ToolMore);
customElements.define('tool-combo', ToolCombo);
customElements.define('top-stub', TopStub);
customElements.define('dock-panel', DockPanel);
customElements.define('cad-canvas', CadCanvas);
customElements.define('prop-row', PropRow);
customElements.define('rebar-preview', RebarPreview);
customElements.define('prop-editor', PropEditor);
customElements.define('stirrup-dialog', StirrupDialog);
</script>
</body>
</html>
